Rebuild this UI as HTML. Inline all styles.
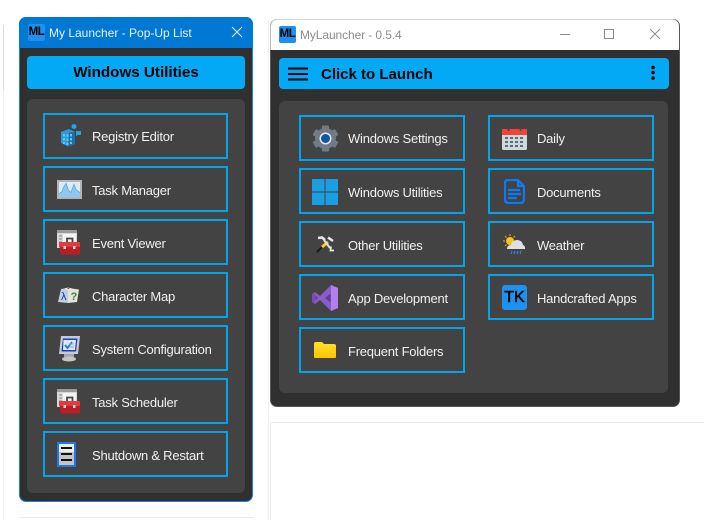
<!DOCTYPE html>
<html><head><meta charset="utf-8"><style>
html,body{margin:0;padding:0;background:#fff}
body{position:relative;width:704px;height:520px;overflow:hidden;font-family:"Liberation Sans",sans-serif}
div,svg,span{position:absolute;box-sizing:border-box}
.item{border:2px solid #03a4ea;height:46px;background:#434343}
.l{left:43px;width:185px}.a{left:299px;width:166px}.b{left:488px;width:166px}
.t{color:#f0f0f0;font-size:13px;white-space:nowrap;line-height:16px;letter-spacing:-.23px}
.ml{background:#1e90f0;color:#000;font-weight:bold;font-size:11.5px;text-align:center;line-height:17px;border-radius:2px;width:17px;height:17px;letter-spacing:-.4px}
.line{background:#ececec}
</style></head><body>
<div class="line" style="left:3px;top:25px;width:1px;height:66px;background:#ddd"></div>
<div class="line" style="left:3px;top:90px;width:1px;height:430px;background:#f0f0f0"></div>
<div class="line" style="left:268px;top:20px;width:1px;height:500px;background:#f0f0f0"></div>
<div class="line" style="left:19px;top:517px;width:235px;height:1px"></div>
<div class="line" style="left:270px;top:422px;width:434px;height:1px"></div>
<div class="line" style="left:270px;top:422px;width:1px;height:98px"></div>

<!-- left window -->
<div style="left:19px;top:17px;width:234px;height:485px;background:#303030;border:1px solid #1a86d8;border-top:0;border-radius:7px;overflow:hidden"></div>
<div style="left:19px;top:17px;width:234px;height:31px;background:#0078d4;border-radius:7px 7px 0 0"></div>
<div class="ml" style="left:28px;top:24px">ML</div>
<div class="t" style="left:49px;top:25px;color:#e8f2fb;font-size:12px;letter-spacing:0">My Launcher - Pop-Up List</div>
<svg style="left:231px;top:26px" width="12" height="12"><path d="M1 1L11 11M11 1L1 11" stroke="#e8f2fb" fill="none"/></svg>
<div style="left:27px;top:56px;width:218px;height:33px;background:#03a9f4;border-radius:4px"></div>
<div style="left:27px;top:56px;width:218px;height:33px;text-align:center;line-height:33px;font-weight:bold;font-size:15.2px;color:#000">Windows Utilities</div>
<div style="left:27px;top:99px;width:218px;height:394px;background:#434343;border-radius:6px"></div>

<div class="item l" style="top:113px"></div>
<div class="item l" style="top:166px"></div>
<div class="item l" style="top:219px"></div>
<div class="item l" style="top:272px"></div>
<div class="item l" style="top:325px"></div>
<div class="item l" style="top:378px"></div>
<div class="item l" style="top:431px"></div>
<div class="t" style="left:92px;top:129px">Registry Editor</div>
<div class="t" style="left:92px;top:183px">Task Manager</div>
<div class="t" style="left:92px;top:236px">Event Viewer</div>
<div class="t" style="left:92px;top:289px">Character Map</div>
<div class="t" style="left:92px;top:342px">System Configuration</div>
<div class="t" style="left:92px;top:395px">Task Scheduler</div>
<div class="t" style="left:92px;top:448px">Shutdown &amp; Restart</div>

<!-- registry -->
<svg style="left:60px;top:123px" width="22" height="24"><path d="M1 9L9 6L15 9V21L8 23.500L1 20Z" fill="#2b9ad8"/><path d="M9 9.500L15 9V21L8 23.500Z" fill="#1c6fa8"/><circle cx="14" cy="3.500" r="2.500" fill="#2aa2e0"/><path d="M16 8h5v4h-3l-2 1z" fill="#2aa2e0"/><path d="M3 11h2v2.500H3zM6.500 11.500h2V14h-2zM3 15h2v2.500H3zM6.500 15.500h2V18h-2zM3 19h2v2H3zM6.500 19.500h2V22h-2zM10 11h2v2.500h-2zM10 15h2v2.500h-2zM10 19h2v2h-2z" fill="#5ccaf5"/></svg>
<!-- task manager -->
<svg style="left:57px;top:180px" width="25" height="19"><rect width="25" height="19" fill="#aeb6bc"/><rect x="2" y="2" width="21" height="15" fill="#dfeaf2"/><path d="M2 14L5 12L7 7L9 4L11 10L14 13L17 5L19 10L23 13" stroke="#3f9fe6" stroke-width="1.200" fill="none"/><path d="M2 14L5 12L7 7L9 4L11 10L14 13L17 5L19 10L23 13V17H2Z" fill="#8cc8f0"/></svg>
<!-- event viewer -->
<svg style="left:57px;top:230px" width="25" height="26"><rect x="0" y="0" width="20" height="18" fill="#d8d8d8"/><rect x="0" y="0" width="20" height="3" fill="#9a9a9a"/><rect x="6" y="4" width="13" height="12" fill="#f5f5f5"/><path d="M2 6h3M2 9h3M2 12h3" stroke="#999" stroke-width="1.200"/><path d="M10 12V8.500h5.500V12" stroke="#444" stroke-width="1.800" fill="none"/><path d="M2 13Q2 12 3 12H22Q23 12 23 13V23Q23 24.500 21 24.500H5Q3.500 24.500 3.500 23Z" fill="#b81f24"/><path d="M2 13Q2 12 3 12H22Q23 12 23 13V17H2Z" fill="#e23a3e"/><rect x="6.500" y="16" width="2.500" height="3" fill="#d8d8d8"/><rect x="16" y="16" width="2.500" height="3" fill="#d8d8d8"/></svg>
<!-- charmap -->
<svg style="left:57px;top:287px" width="24" height="18"><path d="M4 2L11 1V16L1 15Z" fill="#bcd0e6"/><path d="M11 1L22 2.500L20 15L11 16Z" fill="#e2e6da"/><path d="M7 1.500L11 0.500L15 1.500L11 3Z" fill="#f0f0f0"/><path d="M10 .8L13 1.300L11 2.500Z" fill="#d33"/><text x="4" y="13" font-size="11" font-family="Liberation Sans" fill="#23308a">λ</text><text x="13.500" y="13" font-size="11" font-weight="bold" font-family="Liberation Sans" fill="#2f8a3a">?</text></svg>
<!-- sysconfig -->
<svg style="left:58px;top:336px" width="23" height="26"><path d="M3 0H22L20 18H1Z" fill="#c4cad8"/><path d="M5 2.500H19.500L18 15.500H3.500Z" fill="#1a3fb5"/><path d="M5.500 4H18L17 14H5Z" fill="#dce7f8"/><path d="M7 9L9.500 12L14 6" stroke="#1f78d8" stroke-width="1.800" fill="none"/><path d="M11 8h5M11 11h5" stroke="#8fa6c8"/><rect x="6" y="18" width="10" height="3" fill="#a8a8a8"/><ellipse cx="11" cy="23" rx="7" ry="2.500" fill="#c4c4c4"/></svg>
<!-- task scheduler -->
<svg style="left:57px;top:389px" width="25" height="26"><rect x="0" y="0" width="20" height="18" fill="#d8d8d8"/><rect x="0" y="0" width="20" height="3" fill="#9a9a9a"/><rect x="6" y="4" width="13" height="12" fill="#f5f5f5"/><path d="M2 6h3M2 9h3M2 12h3" stroke="#999" stroke-width="1.200"/><path d="M10 12V8.500h5.500V12" stroke="#444" stroke-width="1.800" fill="none"/><path d="M2 13Q2 12 3 12H22Q23 12 23 13V23Q23 24.500 21 24.500H5Q3.500 24.500 3.500 23Z" fill="#b81f24"/><path d="M2 13Q2 12 3 12H22Q23 12 23 13V17H2Z" fill="#e23a3e"/><rect x="6.500" y="16" width="2.500" height="3" fill="#d8d8d8"/><rect x="16" y="16" width="2.500" height="3" fill="#d8d8d8"/></svg>
<!-- shutdown -->
<svg style="left:57px;top:442px" width="19" height="25"><rect width="19" height="25" fill="#1a78f0"/><rect x="2" y="2" width="15" height="21" fill="#c4c4c4"/><rect x="2" y="2" width="15" height="8" fill="#eee"/><path d="M4 6H15M4 12H15M4 18H15" stroke="#111" stroke-width="2"/></svg>

<!-- right window -->
<div style="left:270px;top:19px;width:410px;height:388px;background:#303030;border-radius:7px;border:1px solid #555;border-top:0"></div>
<div style="left:270px;top:19px;width:409px;height:31px;background:#fff;border-radius:7px 7px 0 0;border-top:1px solid #d5d5d5;border-left:1px solid #bbb"></div>
<div class="ml" style="left:279px;top:26px">ML</div>
<div class="t" style="left:300px;top:27px;color:#8c8c8c;font-size:12px;letter-spacing:-.1px">MyLauncher - 0.5.4</div>
<svg style="left:560px;top:28px" width="104" height="14" fill="none" stroke="#8a8a8a"><path d="M0 6.500H10"/><rect x="44.500" y="1.500" width="9" height="9"/><path d="M90 1L100 11M100 1L90 11"/></svg>
<div style="left:279px;top:58px;width:390px;height:31px;background:#03a9f4;border-radius:4px"></div>
<svg style="left:288px;top:67px" width="20" height="14"><path d="M0 1.500H20M0 7H20M0 12.500H20" stroke="#000" stroke-width="2"/></svg>
<div style="left:321px;top:58px;height:33px;line-height:33px;font-weight:bold;font-size:15px;color:#000;white-space:nowrap">Click to Launch</div>
<svg style="left:650px;top:65px" width="6" height="16"><circle cx="3" cy="2.500" r="1.800"/><circle cx="3" cy="7.500" r="1.800"/><circle cx="3" cy="13" r="1.800"/></svg>
<div style="left:279px;top:101px;width:389px;height:292px;background:#434343;border-radius:6px"></div>

<div class="item a" style="top:115px"></div>
<div class="item a" style="top:168px"></div>
<div class="item a" style="top:221px"></div>
<div class="item a" style="top:274px"></div>
<div class="item a" style="top:327px"></div>
<div class="item b" style="top:115px"></div>
<div class="item b" style="top:168px"></div>
<div class="item b" style="top:221px"></div>
<div class="item b" style="top:274px"></div>
<div class="t" style="left:348px;top:131px">Windows Settings</div>
<div class="t" style="left:348px;top:185px">Windows Utilities</div>
<div class="t" style="left:348px;top:238px">Other Utilities</div>
<div class="t" style="left:348px;top:291px">App Development</div>
<div class="t" style="left:348px;top:344px">Frequent Folders</div>
<div class="t" style="left:537px;top:131px">Daily</div>
<div class="t" style="left:537px;top:185px">Documents</div>
<div class="t" style="left:537px;top:238px">Weather</div>
<div class="t" style="left:537px;top:291px">Handcrafted Apps</div>

<!-- settings -->
<svg style="left:312px;top:125px" width="27" height="27" viewBox="-13.500 -13.500 27 27"><g fill="#6f7b85"><circle r="10.500"/><rect x="-3.500" y="-13" width="7" height="26" rx="1"/><rect x="-3.500" y="-13" width="7" height="26" rx="1" transform="rotate(60)"/><rect x="-3.500" y="-13" width="7" height="26" rx="1" transform="rotate(120)"/></g><circle r="6" fill="#e4eaf0"/><circle r="4.500" fill="#0f55a5"/></svg>
<!-- windows -->
<svg style="left:312px;top:179px" width="26" height="26" fill="#1a9fe2"><rect width="12.500" height="12.500"/><rect x="13.500" width="12.500" height="12.500"/><rect y="13.500" width="12.500" height="12.500"/><rect x="13.500" y="13.500" width="12.500" height="12.500"/></svg>
<!-- tools: hammer and wrench crossed, yellow tape at the centre -->
<svg style="left:316px;top:236px" width="19" height="17" fill="none"><path d="M1 16L7 10" stroke="#1c1c1c" stroke-width="2"/><path d="M6 11L12 6" stroke="#f2d21e" stroke-width="2.800"/><path d="M2 2L6 1.500L9 4" stroke="#e8e8e8" stroke-width="2.600"/><path d="M8 4L14 12" stroke="#dcdcdc" stroke-width="2.200"/><path d="M12 1.500L17 5" stroke="#e8e8e8" stroke-width="2.500"/><path d="M15 10.500L14.500 14.500L18 14.500" stroke="#e8e8e8" stroke-width="1.800"/></svg>
<!-- VS -->
<svg style="left:312px;top:285px" width="26" height="26"><path d="M19 0L8 11L3 7L0 9V17L3 19L8 15L19 26L26 23V3Z" fill="#8a5cc9"/><path d="M3 7L0 9V17L3 19Z" fill="#7a4cb5"/><path d="M18.500 8.500L13 13L18.500 17.500Z" fill="#5f3d92"/><path d="M3.500 10.500L6 13L3.500 15.500Z" fill="#5f3d92"/><path d="M19 0L26 3V23L19 26V17L19 9Z" fill="#b180ec"/></svg>
<!-- folder -->
<svg style="left:314px;top:342px" width="22" height="16"><defs><linearGradient id="f" x1="0" y1="0" x2="0" y2="1"><stop offset="0" stop-color="#ffe229"/><stop offset="1" stop-color="#ffc400"/></linearGradient></defs><path d="M0 2Q0 0 2 0H8L10 2H20Q22 2 22 4V15Q22 16 21 16H1Q0 16 0 15Z" fill="url(#f)"/></svg>
<!-- calendar -->
<svg style="left:502px;top:127px" width="26" height="24"><rect y="2" width="25" height="21" rx="1.500" fill="#cfd8dc"/><path d="M0 8V3.500Q0 2 1.500 2H23.500Q25 2 25 3.500V8Z" fill="#f44336"/><path d="M6.500 0V4M18.500 0V4" stroke="#37474f" stroke-width="1.500"/><g fill="#546e7a"><path d="M3 10h3v2H3zM8 10h3v2H8zM13 10h3v2h-3zM18 10h3v2h-3zM3 14h3v2H3zM8 14h3v2H8zM13 14h3v2h-3zM18 14h3v2h-3zM3 18h3v2H3zM8 18h3v2H8zM13 18h3v2h-3zM18 18h3v2h-3z"/></g></svg>
<!-- doc -->
<svg style="left:504px;top:179px" width="21" height="25" fill="none" stroke="#0a7bf5" stroke-width="2.200"><path d="M4 1H14L20 7V20Q20 24 16 24H5Q1 24 1 20V4Q1 1 4 1Z"/><path d="M14 1V7H20"/><path d="M4 11H16M4 15H17M4 19H13"/></svg>
<!-- weather -->
<svg style="left:503px;top:234px" width="23" height="21"><circle cx="7" cy="7" r="4" fill="#f5c518"/><path d="M7 0V2M0 7H2M2 2L3.500 3.500M12 2L10.500 3.500M2 12L3.500 10.500" stroke="#f5a418"/><path d="M4 15Q4 11 8 11Q9 6 14 6Q19 6 20 11Q22.500 12 22 15Z" fill="#e0e0e0"/><path d="M9 17L8 20M12 17L11 20M15 17L14 20M18 17L17 20" stroke="#2a85e0" stroke-width="1.200"/></svg>
<!-- TK -->
<div style="left:502px;top:285px;width:25px;height:25px;background:#1e90f0;border-radius:3px;color:#000;font-size:16px;text-align:center;line-height:25px;-webkit-text-stroke:.5px #000">TK</div>
</body></html>
